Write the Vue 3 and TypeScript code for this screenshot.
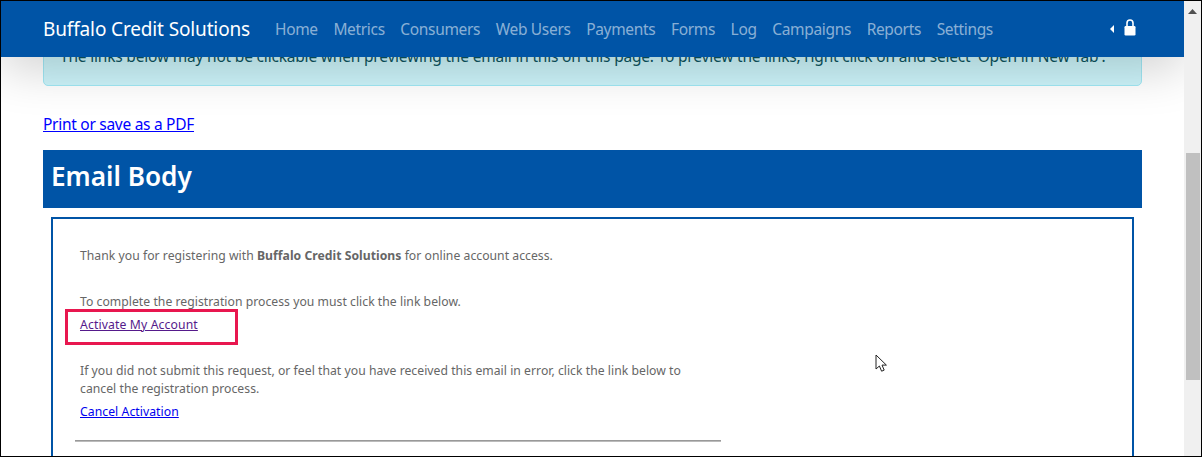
<script setup lang="ts">
const navItems: string[] = ['Home', 'Metrics', 'Consumers', 'Web Users', 'Payments', 'Forms', 'Log', 'Campaigns', 'Reports', 'Settings']
</script>

<template>
  <div class="frame">
    <div class="page">
      <header class="nav">
        <a class="brand">Buffalo Credit Solutions</a>
        <ul class="menu">
          <li v-for="item in navItems" :key="item">{{ item }}</li>
        </ul>
        <div class="tools">
          <svg class="caret" width="4" height="8" viewBox="0 0 4 8"><path d="M4 0v8L0 4z" fill="#fff" /></svg>
          <svg class="lock" width="12" height="17" viewBox="0 0 12 17">
            <path d="M3 8V4a3 3 0 0 1 6 0v4" fill="none" stroke="#fff" stroke-width="1.6" />
            <rect x="0.5" y="7" width="11" height="9.5" rx="1.2" fill="#fff" />
          </svg>
        </div>
      </header>
      <main class="main">
        <div class="alert">The links below may not be clickable when previewing the email in this on this page. To preview the links, right click on and select 'Open in New Tab'.</div>
        <a class="print" href="#">Print or save as a PDF</a>
        <h1 class="title">Email Body</h1>
        <section class="email">
          <p class="thanks">Thank you for registering with <b>Buffalo Credit Solutions</b> for online account access.</p>
          <p class="complete">To complete the registration process you must click the link below.</p>
          <p class="activate">
            <a class="visited" href="#">Activate My Account</a>
            <span class="mark"></span>
          </p>
          <p class="cancel-text">If you did not submit this request, or feel that you have received this email in error, click the link below to cancel the registration process.</p>
          <a class="cancel" href="#">Cancel Activation</a>
          <hr class="rule" />
        </section>
        <svg class="cursor" width="14" height="20" viewBox="0 0 14 20">
          <path d="M1 1v14l3.4-3 2.2 5.2 2.6-1.1-2.2-5h4.4z" fill="#fff" stroke="#222" stroke-width="1" stroke-linejoin="round" />
        </svg>
      </main>
    </div>
    <aside class="scrollbar">
      <svg class="arrow" width="9" height="5" viewBox="0 0 9 5"><path d="M4.5 0L9 5H0z" fill="#505050" /></svg>
      <div class="thumb"></div>
    </aside>
  </div>
</template>

<style>
html, body { margin: 0; background: #fff; overflow: hidden; }
</style>

<style scoped>
.frame {
  box-sizing: border-box;
  width: 1202px;
  height: 457px;
  border: 1px solid #000;
  display: flex;
  overflow: hidden;
  font-family: "Noto Sans", "Open Sans", sans-serif;
  background: #fff;
}
.page { flex: 1; min-width: 0; position: relative; overflow: hidden; }
.nav {
  position: relative;
  z-index: 2;
  height: 56px;
  background: #0054a6;
  display: flex;
  align-items: center;
  padding: 0 42px;
  box-shadow: 0 10px 50px rgba(0, 0, 0, 0.2);
}
.brand { color: #fff; font-size: 19px; letter-spacing: -0.14px; white-space: nowrap; width: 232px; }
.menu { list-style: none; margin: 0; padding: 0; display: flex; gap: 15.6px; flex: 1; }
.menu li { color: rgba(255, 255, 255, 0.55); font-size: 15.5px; letter-spacing: -0.33px; white-space: nowrap; }
.tools { display: flex; align-items: center; gap: 10px; margin-right: 6px; }
.lock { margin-top: -3px; }
.main { position: relative; padding: 0 42px; }
.alert {
  box-sizing: border-box;
  height: 41px;
  margin-top: -12px;
  padding: 0 16px;
  line-height: 20px;
  font-size: 15.5px;
  letter-spacing: -0.195px;
  white-space: nowrap;
  color: #0c5460;
  background: #ccf4fa;
  border: 1px solid #a0e8f5;
  border-radius: 0 0 5px 5px;
  margin-bottom: 27px;
}
.print { display: block; font-size: 15.5px; letter-spacing: -0.28px; line-height: 22px; color: #00f; width: max-content; }
.title {
  margin: 15px 0 0;
  height: 58px;
  padding-left: 8px;
  background: #0054a6;
  color: #fff;
  font-size: 26.2px;
  font-weight: 600;
  line-height: 52px;
}
.email {
  box-sizing: border-box;
  margin: 9px 8px 0 8px;
  height: 300px;
  padding: 27px 22px 0 27px;
  border: 2px solid #0054a6;
  font-size: 12.2px;
  letter-spacing: 0.03px;
  line-height: 19px;
  color: #666;
  position: relative;
}
.email p { margin: 0; }
.complete { margin-top: 27px !important; }
.activate { margin-top: 4px !important; }
.cancel-text { margin-top: 28px !important; width: 620px; line-height: 18px; }
.visited { color: #551a8b; letter-spacing: 0.13px; }
.cancel { display: block; width: max-content; color: #00e; margin-top: 4px; letter-spacing: 0.06px; }
.mark {
  position: absolute;
  left: 12px;
  top: 90px;
  width: 167px;
  height: 30px;
  border: 3px solid #e8174f;
}
.rule { margin: 19px 0 0 -5px; width: 646px; height: 0; border: 0; border-top: 1px solid #999; border-bottom: 1px solid #bbb; }
.cursor { position: absolute; left: 874px; top: 309px; }
.scrollbar { width: 17px; flex: none; background: #f0f0f0; position: relative; }
.arrow { position: absolute; left: 4px; top: 8px; }
.thumb { position: absolute; left: 2px; right: 1px; top: 152px; height: 227px; background: #c0c0c0; }
</style>
